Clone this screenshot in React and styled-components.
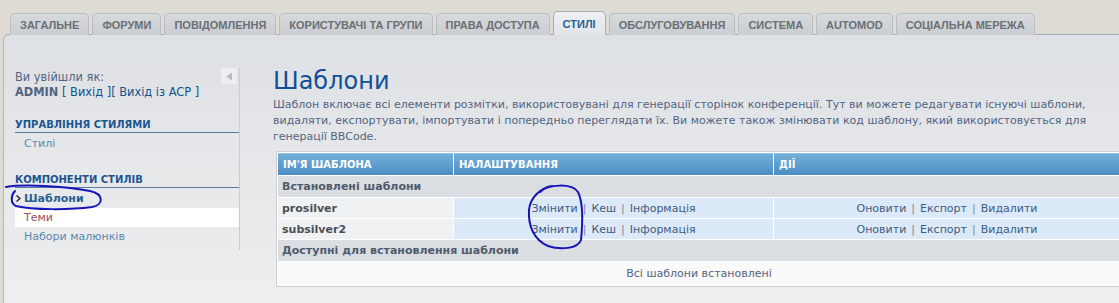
import React from "react";
import styled, { createGlobalStyle, css } from "styled-components";

const GlobalStyle = createGlobalStyle`
  html, body {
    margin: 0;
    padding: 0;
    background: #dedbd4;
    overflow: hidden;
  }
  body {
    font-family: "DejaVu Sans", Verdana, sans-serif;
    font-size: 11px;
    color: #536482;
  }
`;

const Page = styled.div`
  position: relative;
  width: 1160px;
  height: 303px;
  padding: 12px 0 0 3px;
  box-sizing: border-box;
`;

const TabBar = styled.ul`
  display: flex;
  align-items: flex-end;
  gap: 3px;
  list-style: none;
  margin: 0 0 -1px;
  padding: 0 0 0 7px;
  height: 23px;
  position: relative;
  z-index: 2;
`;

const Tab = styled.li`
  height: 22px;
  line-height: 22px;
  padding: 0 9px;
  box-sizing: border-box;
  border: 1px solid #b9bec4;
  border-bottom: none;
  border-radius: 5px 5px 0 0;
  background: linear-gradient(#d7dadd, #cacdd1);
  font-family: "Liberation Sans", Arial, sans-serif;
  font-weight: bold;
  font-size: 11px;
  color: #6b6f75;
  white-space: nowrap;
  ${(p) =>
    p.active &&
    css`
      height: 24px;
      line-height: 24px;
      border-color: #a6acb3;
      background: linear-gradient(#eef0f2, #e2e5e8);
      color: #2d5e93;
    `}
`;

const Panel = styled.div`
  display: flex;
  height: 268px;
  border-top: 1px solid #a6acb3;
  border-left: 1px solid #b3b8be;
  border-radius: 6px 0 0 0;
  background: linear-gradient(#dde0e4 0%, #e6e8ea 50%, #eeeeef 100%);
`;

const Sidebar = styled.div`
  width: 236px;
  flex-shrink: 0;
  padding-top: 33px;
`;

const SideInner = styled.div`
  border-right: 1px solid #c9ccd0;
  padding-bottom: 4px;
`;

const LoginRow = styled.div`
  display: flex;
  justify-content: space-between;
  align-items: flex-start;
  padding-left: 11px;
`;

const Login = styled.div`
  line-height: 15px;
  padding-top: 2px;
  font-size: 11.4px;
  strong {
    font-weight: bold;
    color: #536482;
  }
  a {
    color: #105289;
  }
`;

const Toggle = styled.div`
  width: 16px;
  height: 16px;
  margin-right: 2px;
  background: #eceef0;
  display: flex;
  align-items: center;
  justify-content: center;
`;

const SectionTitle = styled.div`
  margin: ${(p) => (p.first ? "19px" : "21px")} 0 0 11px;
  padding-bottom: 2px;
  border-bottom: 1px solid #5a7b9b;
  font-size: 10px;
  font-weight: bold;
  color: #1a5590;
  text-transform: uppercase;
`;

const MenuItem = styled.div`
  margin-left: 11px;
  height: 19px;
  line-height: 19px;
  padding-left: 9px;
  position: relative;
  color: #5b88ad;
  ${(p) =>
    p.first &&
    css`
      margin-top: 1px;
    `}
  ${(p) =>
    p.current &&
    css`
      font-weight: bold;
      color: #2b5f91;
    `}
  ${(p) =>
    p.hover &&
    css`
      background: #ffffff;
      color: #a04a5c;
    `}
`;

const Bullet = styled.svg`
  position: absolute;
  left: 1px;
  top: 6px;
`;

const Main = styled.div`
  flex: 1;
  padding: 31px 0 0 33px;
`;

const Title = styled.h1`
  margin: 0;
  font-family: "DejaVu Sans", Verdana, sans-serif;
  font-weight: normal;
  font-size: 24px;
  line-height: 30px;
  color: #115098;
`;

const Intro = styled.p`
  margin: 1px 0 0;
  width: 846px;
  line-height: 16px;
  color: #536482;
`;

const Table = styled.table`
  margin: 6px 0 0 3px;
  width: 846px;
  border: 1px solid #cccfd3;
  border-spacing: 1px;
  background: #ffffff;
  table-layout: fixed;
`;

const Th = styled.th`
  height: 21px;
  padding: 0 5px;
  text-align: left;
  background: linear-gradient(#74afd8, #4c8dc3);
  border-top: 1px solid #8fc0e2;
  color: #ffffff;
  font-size: 10px;
  font-weight: bold;
  text-transform: uppercase;
`;

const GroupCell = styled.td`
  height: 21px;
  padding: 0 4px;
  background: #dadde1;
  font-weight: bold;
  color: #4e5b6d;
`;

const Cell = styled.td`
  height: 20px;
  padding: 0 4px;
  background: ${(p) => (p.shade ? "#f0f1f2" : "#dce9f8")};
  text-align: ${(p) => (p.center ? "center" : "left")};
  font-weight: ${(p) => (p.bold ? "bold" : "normal")};
  color: ${(p) => (p.bold ? "#4a4f57" : "#536482")};
`;

const EmptyCell = styled.td`
  height: 21px;
  background: #fafafa;
  text-align: center;
  color: #536482;
`;

const Link = styled.a`
  color: #3f5b80;
  text-decoration: none;
`;

const Sep = styled.span`
  color: #7a8594;
  margin: 0 5px;
`;

const Marks = styled.svg`
  position: absolute;
  left: 0;
  top: 0;
  pointer-events: none;
`;

const tabs = [
  "Загальне",
  "Форуми",
  "Повідомлення",
  "Користувачі та групи",
  "Права доступа",
  "Стилі",
  "Обслуговування",
  "Система",
  "Automod",
  "Соціальна мережа",
];

const styles = ["prosilver", "subsilver2"];

const LinkList = ({ items }) =>
  items.map((t, i) => (
    <React.Fragment key={t}>
      {i > 0 && <Sep>|</Sep>}
      <Link>{t}</Link>
    </React.Fragment>
  ));

export default function App() {
  return (
    <Page>
      <GlobalStyle />
      <TabBar>
        {tabs.map((t) => (
          <Tab key={t} active={t === "Стилі"}>
            {t.toUpperCase()}
          </Tab>
        ))}
      </TabBar>
      <Panel>
        <Sidebar>
          <SideInner>
            <LoginRow>
              <Login>
                Ви увійшли як:
                <br />
                <strong>ADMIN</strong> <a>[ Вихід ]</a>
                <a>[ Вихід із ACP ]</a>
              </Login>
              <Toggle>
                <svg width="8" height="9" viewBox="0 0 8 9">
                  <path d="M7 0.5 L1 4.5 L7 8.5 Z" fill="#b9bdc2" />
                </svg>
              </Toggle>
            </LoginRow>
            <SectionTitle first>Управління стилями</SectionTitle>
            <MenuItem first>Стилі</MenuItem>
            <SectionTitle>Компоненти стилів</SectionTitle>
            <MenuItem first current>
              <Bullet width="5" height="7" viewBox="0 0 5 7">
                <path d="M0.5 0.5 L4 3.5 L0.5 6.5" fill="none" stroke="#222" strokeWidth="1.4" />
              </Bullet>
              Шаблони
            </MenuItem>
            <MenuItem hover>Теми</MenuItem>
            <MenuItem>Набори малюнків</MenuItem>
          </SideInner>
        </Sidebar>
        <Main>
          <Title>Шаблони</Title>
          <Intro>
            Шаблон включає всі елементи розмітки, використовувані для генерації
            сторінок конференції. Тут ви можете редагувати існуючі шаблони,
            видаляти, експортувати, імпортувати і попередньо переглядати їх. Ви
            можете також змінювати код шаблону, який використовується для
            генерації BBCode.
          </Intro>
          <Table>
            <colgroup>
              <col style={{ width: 175 }} />
              <col style={{ width: 319 }} />
              <col />
            </colgroup>
            <thead>
              <tr>
                <Th>Ім'я шаблона</Th>
                <Th>Налаштування</Th>
                <Th>Дії</Th>
              </tr>
            </thead>
            <tbody>
              <tr>
                <GroupCell colSpan={3}>Встановлені шаблони</GroupCell>
              </tr>
              {styles.map((s) => (
                <tr key={s}>
                  <Cell shade bold>
                    {s}
                  </Cell>
                  <Cell center>
                    <LinkList items={["Змінити", "Кеш", "Інформація"]} />
                  </Cell>
                  <Cell center>
                    <LinkList items={["Оновити", "Експорт", "Видалити"]} />
                  </Cell>
                </tr>
              ))}
              <tr>
                <GroupCell colSpan={3}>Доступні для встановлення шаблони</GroupCell>
              </tr>
              <tr>
                <EmptyCell colSpan={3}>Всі шаблони встановлені</EmptyCell>
              </tr>
            </tbody>
          </Table>
        </Main>
      </Panel>
      <Marks width="1119" height="303" viewBox="0 0 1119 303">
        <g fill="none" stroke="#1616b8" strokeWidth="2" strokeLinecap="round">
          <path d="M6 187 C24 184 62 186 90 191 C104 194 104 205 92 207 C70 210 32 210 16 206 C10 203 11 195 15 191" />
          <path d="M540 192 C548 184 572 183 578 192 C584 204 582 230 581 240 C578 249 560 250 548 246 C534 240 528 226 529 210 C530 198 540 188 552 186" />
        </g>
      </Marks>
    </Page>
  );
}
